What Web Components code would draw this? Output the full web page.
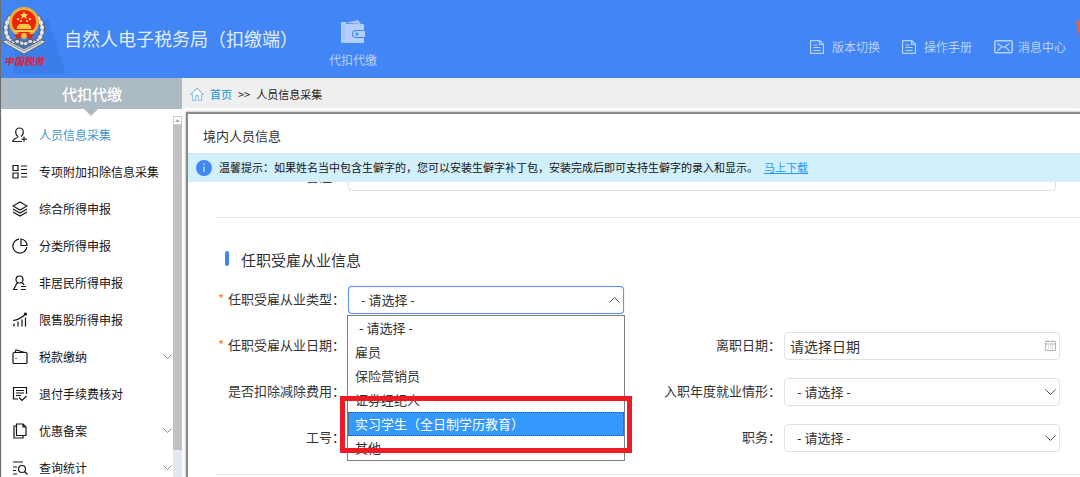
<!DOCTYPE html>
<html lang="zh-CN">
<head>
<meta charset="utf-8">
<title>自然人电子税务局（扣缴端）</title>
<style>
  html, body { margin: 0; height: 100%; overflow: hidden; }
  body { font-family: "Noto Sans CJK SC", "Noto Sans", sans-serif; color: #333; background: #fff; }
</style>
</head>
<body>
<tax-app></tax-app>
<script>
const BASE = `*{box-sizing:border-box} svg{display:block;flex:none} a{color:inherit;text-decoration:none} button,input,select{font-family:inherit;color:inherit;margin:0}`;
function define(name, render) {
  customElements.define(name, class extends HTMLElement {
    constructor() {
      super();
      this.attachShadow({ mode: 'open' });
    }
    connectedCallback() {
      const r = render(this);
      this.shadowRoot.innerHTML = `<style>${BASE}${r.css}</style>${r.html}`;
    }
  });
}

define('tax-emblem', () => ({
  css: `:host{display:flex;flex-direction:column;align-items:center;width:44px}
    span{font-size:10px;line-height:12px;font-weight:700;color:#e0222e;font-style:italic;white-space:nowrap}`,
  html: `<svg width="44" height="48" viewBox="0 0 44 48" aria-hidden="true">
    <g fill="none" stroke-linecap="round">
      <path d="M8 11C1 19 3 31 12 37M36 11C43 19 41 31 32 37" stroke="#56677f" stroke-width="6"/>
      <path d="M8 11C1 19 3 31 12 37M36 11C43 19 41 31 32 37" stroke="#dfe4ec" stroke-width="4" stroke-dasharray="1 4"/>
      <path d="M10 36Q16 32 22 38Q28 32 34 36" stroke="#56677f" stroke-width="5"/>
      <path d="M10 36Q16 32 22 38Q28 32 34 36" stroke="#d5dbe4" stroke-width="3" stroke-dasharray="1 4"/>
    </g>
    <path d="M0 34L5 33L22 42L39 33L44 34L40 37L22 47L4 37Z" fill="#dfe2e7" stroke="#5c6470" stroke-width="1"/>
    <path d="M5 35L22 44L39 35" fill="none" stroke="#7c8490" stroke-width="1"/>
    <circle cx="22" cy="15" r="15" fill="#e2b23c"/>
    <circle cx="22" cy="15" r="12" fill="#f0230f"/>
    <path d="M22 4l1 3h3l-2 2 1 3-3-2-3 2 1-3-2-2h3zM15 11h2v2h-2zM27 11h2v2h-2zM18 13h2v2h-2zM24 13h2v2h-2z" fill="#ffe05a"/>
    <path d="M17 17h10l1 2h1v3H15v-3h1zM12 23h20v2H12z" fill="#f7c944"/>
    <path d="M12 28Q22 24 32 28L29 32Q22 29 15 32Z" fill="#d9281c"/>
    <circle cx="22" cy="29" r="3" fill="#e9bb40"/>
  </svg><span>中国税务</span>`
}));

const DOC = `<svg width="14" height="14" viewBox="0 0 14 14" fill="none" stroke="currentColor"><path d="M1.5.5h8l4 4v8q0 1-1 1h-11q-1 0-1-1v-11q0-1 1-1z" stroke-width="1.3"/><path d="M9.500.5v4h4M3.500 5h4M3.500 7.500h7M3.500 10.500h7" stroke-width="1.200"/></svg>`;
const MAIL = `<svg width="19" height="14" viewBox="0 0 19 14" fill="none" stroke="currentColor"><rect x=".8" y=".8" width="17.400" height="12" rx="1.500" stroke-width="1.500"/><path d="M3.500 3.500l6 4 6-4M3.500 11l4-4M15.500 11l-4-4" stroke-width="1.100"/></svg>`;

define('app-header', () => ({
  css: `:host{display:flex;align-items:center;position:relative;height:78px;padding:0 14px 0 1px;background:#4285f5;color:#dbe8fd;overflow:hidden}
    .shade{position:absolute;left:13px;top:18px}
    tax-emblem{position:relative;margin-bottom:4px}
    h1{margin:0 0 2px 18px;font-size:18px;line-height:26px;font-weight:400;white-space:nowrap;color:#e3edfe}
    .module{display:flex;flex-direction:column;align-items:center;gap:7px;margin:10px 0 0 31px;font-size:12px;line-height:18px;color:#b9d3fc}
    nav{display:flex;gap:22px;margin:15px 0 0 auto;font-size:12px;line-height:18px;color:#b9d3fc}
    nav a{display:flex;align-items:center;gap:8px;white-space:nowrap}
    nav a:last-child{gap:5px}
    .ribbon{position:absolute;right:0;top:20px}`,
  html: `<svg class="shade" width="52" height="56"><path d="M0 56V24L34 0L52 56Z" fill="#3b7deb"/></svg>
    <tax-emblem></tax-emblem><h1>自然人电子税务局（扣缴端）</h1>
    <a class="module" href="#withholding"><svg width="26" height="24" viewBox="0 0 26 24"><path d="M5 3L18 0l3 4z" fill="#a9c8f9"/><path d="M2 2h4v2h17q1 0 1 1v5h-8q-4 0-4 4t4 4h8v4q0 1-1 1H2q-1 0-1-1V3q0-1 1-1z" fill="#b4cffa"/><path d="M4 4v19" stroke="#5e97f4" stroke-width="1" stroke-dasharray="1 2"/><path d="M16 11h9v6h-9q-3 0-3-3t3-3z" fill="#b4cffa"/><circle cx="17" cy="14" r="1.500" fill="#4285f5"/></svg>代扣代缴</a>
    <nav><a href="#version">${DOC}版本切换</a><a href="#manual">${DOC}操作手册</a><a href="#messages">${MAIL}消息中心</a></nav>
    <svg class="ribbon" width="4" height="20"><path d="M4 0L0 2L4 18Z" fill="#f1602f"/></svg>`
}));

const ICONS = {
  person: `<path d="M6 9.500C2.500 7 3 1 7.500 1S12.500 7 9 9.500M6 9.500C6.500 11.500.8 11 .8 14.500H10M12 9.500v5.500M9.500 12.200h5.500"/>`,
  list: `<path d="M1 1.500h5v5H1zM1 9h5v5H1zM9 2h6M9 5.500h6M9 9.500h6M9 13h6"/>`,
  layers: `<path d="M8 1l7 4-7 4-7-4zM1 8l7 4 7-4M1 11l7 4 7-4"/>`,
  pie: `<path d="M7 1.200A7 7 0 1 0 14.800 9M9 1v6.500h6A6.500 6.500 0 0 0 9 1z"/>`,
  resident: `<circle cx="7.500" cy="4.500" r="3.500"/><path d="M5.500 7.500C4 9 3.500 12 1.500 14.500h4M9.500 8q2 0 2.500 2M9 11.500h5M9 14.500h5"/>`,
  chart: `<path d="M2 14.500v-3M6 14.500v-5M10 14.500v-7M13.500 14.500v-9M1 8.500C6 8 10 5.500 13 2.500"/><circle cx="13.500" cy="2" r="1" fill="currentColor"/>`,
  wallet: `<path d="M1 4.500q0-1 1-1h12q1 0 1 1v9q0 1-1 1H2q-1 0-1-1zM3 3.500l1-2.500 9 2.500M4 9v1"/>`,
  check: `<path d="M14.500 8V1.500H1.500v11.500H6M4 4.500h8M4 7h8M4 9.500h5M7 11.500l3 3 4.500-4.500"/>`,
  copy: `<path d="M4.500 1H11l3 3v8.500H4.500zM4.500 3H2v12h9v-2M11 1v3h3"/>`,
  query: `<path d="M1 2h10M1 7h4M1 10.500h3M1 14h4"/><circle cx="10" cy="9" r="3.500"/><path d="M12.500 11.500l3 3"/>`
};

define('side-item', el => ({
  css: `:host{display:block}
    a{display:flex;align-items:center;gap:11px;height:37px;padding:0 1px 0 10px;font-size:12px;color:#151515;white-space:nowrap}
    a.on{color:#4596cd} a.on svg{color:#222}
    .chev{margin-left:auto;color:#8a8a8a}`,
  html: `<a href="#menu" class="${el.hasAttribute('active') ? 'on' : ''}"><svg width="16" height="16" viewBox="0 0 16 16" fill="none" stroke="currentColor" stroke-width="1.200">${ICONS[el.getAttribute('icon')]}</svg><slot></slot>${el.hasAttribute('expandable') ? '<svg class="chev" width="9" height="6" viewBox="0 0 9 6" fill="none" stroke="currentColor"><path d="M.5.500l4 4 4-4"/></svg>' : ''}</a>`
}));

define('side-bar', () => ({
  css: `:host{display:flex;flex-direction:column;width:181px;flex:none;min-height:0}
    h2{position:relative;z-index:1;margin:0;flex:none;height:31px;font-size:15px;line-height:31px;font-weight:500;text-align:center;color:#fff;background:#acbac3;padding-left:1px}
    h2 svg{position:absolute;left:83px;top:31px}
    .body{display:flex;flex:1;min-height:0;padding-top:7px}
    nav{flex:1;min-width:0;overflow:hidden;border-left:1px solid #e8e8e8}
    .bar{display:flex;flex-direction:column;width:9px;background:#e3e8f0}
    .up{display:flex;align-items:center;justify-content:center;height:9px;background:#fff;border:1px solid #ccc}
    .thumb{background:#c1c1c1;height:90%}`,
  html: `<h2>代扣代缴<svg width="14" height="7"><path d="M0 0h14L7 7z" fill="#acbac3"/></svg></h2>
    <div class="body"><nav>
      <side-item icon="person" active>人员信息采集</side-item>
      <side-item icon="list">专项附加扣除信息采集</side-item>
      <side-item icon="layers">综合所得申报</side-item>
      <side-item icon="pie">分类所得申报</side-item>
      <side-item icon="resident">非居民所得申报</side-item>
      <side-item icon="chart">限售股所得申报</side-item>
      <side-item icon="wallet" expandable>税款缴纳</side-item>
      <side-item icon="check">退付手续费核对</side-item>
      <side-item icon="copy" expandable>优惠备案</side-item>
      <side-item icon="query" expandable>查询统计</side-item>
    </nav><div class="bar"><div class="up"><svg width="5" height="3"><path d="M0 3h5L2.500 0z" fill="#aaa"/></svg></div><div class="thumb"></div></div></div>`
}));

define('bread-crumb', () => ({
  css: `:host{display:flex;align-items:center;flex:none;height:30px;padding-left:8px;background:#efefef;font-size:11px;line-height:30px;color:#1c1c1c;padding-top:2px}
    svg{margin-right:6px} a{color:#1493d6} i{font-style:normal;margin:0 6px}`,
  html: `<svg width="14" height="14" viewBox="0 0 14 14" fill="#fff" stroke="#8fc4e6" stroke-width="1.200"><path d="M.8 7.500L7 1l6.200 6.500H11.500v5.800H8.500V9q-1.500-1.500-3 0v4.300H2.500V7.500z"/></svg><a href="#home">首页</a><i>&gt;&gt;</i><span>人员信息采集</span>`
}));

define('tip-bar', () => ({
  css: `:host{display:flex;align-items:center;flex:none;height:29px;padding-left:8px;gap:7px;background:#d2effc;border-top:1px solid #dde3e8;font-size:11px;line-height:16px;color:#111;white-space:nowrap}
    span{margin-bottom:2px}
    a{color:#1e9bff;text-decoration:underline;margin-left:6px}`,
  html: `<svg width="16" height="16" viewBox="0 0 16 16"><circle cx="8" cy="8" r="8" fill="#4285f5"/><path d="M8 6.500V12M8 3.500v1.500" stroke="#dcecff" stroke-width="1.200"/></svg><span>温馨提示：如果姓名当中包含生僻字的，您可以安装生僻字补丁包，安装完成后即可支持生僻字的录入和显示。<a href="#download">马上下载</a></span>`
}));

/* A label cell and a control cell; the host dissolves into the form's grid. */
define('form-field', el => {
  const kind = el.getAttribute('kind'), open = el.hasAttribute('open');
  let control;
  if (kind === 'select') control = `<select id="c"><option>- 请选择 -</option></select><svg class="mark" width="11" height="6" viewBox="0 0 11 6" fill="none" stroke="#555"><path d="${open ? 'M.5 5.500l5-5 5 5' : 'M.5.500l5 5 5-5'}"/></svg>`;
  else if (kind === 'date') control = `<input id="c" type="text" placeholder="请选择日期"><svg class="mark cal" width="11" height="11" viewBox="0 0 11 11" fill="none" stroke="#b5b5b5"><path d="M.5 1.500h10v9H.5zM.5 4h10M3 0v2M8 0v2M3 6h1M5 6h1M7 6h1M3 8h1M5 8h1M7 8h1"/></svg>`;
  else control = `<input id="c" type="text">`;
  return {
    css: `:host{display:contents}
      label{align-self:center;padding-bottom:2px;text-align:right;font-size:13px;line-height:20px;white-space:nowrap;color:#333}
      b{font-weight:400;color:#ff7f27;margin-right:4px}
      .box{position:relative;min-width:0}
      input,select{display:block;width:100%;height:28px;border:1px solid #e2e2e2;border-radius:4px;background:#fff;outline:0;appearance:none;line-height:20px}
      select{font-size:13px;padding:0 24px 0 12px}
      input{font-size:14px;padding:0 24px 0 5px}
      input::placeholder{color:#333;opacity:1}
      .open select{border-color:#5b96f7;box-shadow:0 0 1px #5b96f7}
      .mark{position:absolute;right:4px;top:11px;pointer-events:none}
      .cal{top:8px}`,
    html: `<label for="c">${el.hasAttribute('required') ? '<b>*</b>' : ''}${el.getAttribute('label')}：</label><div class="box ${open ? 'open' : ''}">${control}<slot></slot></div>`
  };
});

define('option-list', () => ({
  css: `:host{position:absolute;z-index:2;left:-1px;right:-1px;top:29px}
    ul{margin:0;padding:0;list-style:none;background:#fff;border:1px solid #808080}
    li{height:24px;line-height:24px;padding-left:7px;font-size:13px;color:#333;white-space:nowrap}
    li:first-child{padding-left:11px}
    li[aria-selected=true]{background:#3399ff;color:#fff;outline:1px dotted #6b4a1c;outline-offset:-1px}
    .frame{position:absolute;left:-7px;right:-7px;top:81px;height:57px;border:5px solid #ed1c24}`,
  html: `<ul role="listbox" aria-label="任职受雇从业类型"><li role="option">- 请选择 -</li><li role="option">雇员</li><li role="option">保险营销员</li><li role="option">证券经纪人</li><li role="option" aria-selected="true">实习学生（全日制学历教育）</li><li role="option">其他</li></ul><div class="frame"></div>`
}));

define('person-form', () => ({
  css: `:host{display:block;flex:1;min-height:0;overflow:hidden;padding-left:27px}
    .grid{display:grid;grid-template-columns:130px 1fr 154px 1fr;column-gap:3px;row-gap:18px;padding-right:20px}
    .remark{grid-template-columns:130px 1fr;margin-top:-19px;padding-right:24px}
    hr{margin:26px 0 0;border:0;border-top:1px solid #e6e6e6}
    h3{display:flex;align-items:center;gap:12px;margin:30px 0 14px;padding-left:10px;font-size:15px;line-height:24px;font-weight:400;color:#333}
    h3::before{content:"";width:4px;height:15px;border-radius:2px;background:#4285f5;margin-top:-4px}
    hr.end{margin-top:22px}`,
  html: `<div class="grid remark"><form-field kind="text" label="备注"></form-field></div>
    <hr><h3>任职受雇从业信息</h3>
    <div class="grid">
      <form-field kind="select" label="任职受雇从业类型" required open><option-list></option-list></form-field><span></span><span></span>
      <form-field kind="text" label="任职受雇从业日期" required></form-field>
      <form-field kind="date" label="离职日期"></form-field>
      <form-field kind="select" label="是否扣除减除费用"></form-field>
      <form-field kind="select" label="入职年度就业情形"></form-field>
      <form-field kind="text" label="工号"></form-field>
      <form-field kind="select" label="职务"></form-field>
    </div><hr class="end">`
}));

define('person-panel', () => ({
  css: `:host{display:flex;flex-direction:column;flex:1;min-height:0;margin:4px 0 0 4px;border:solid #8a8a8a;border-width:2px 0 0 2px;box-shadow:0 0 2px #888;background:#fff}
    h2{flex:none;margin:0;padding:4px 0 0 15px;height:39px;font-size:13px;line-height:36px;font-weight:400;color:#333}`,
  html: `<h2>境内人员信息</h2><tip-bar></tip-bar><person-form></person-form>`
}));

define('tax-app', () => ({
  css: `:host{display:flex;flex-direction:column;height:100vh;border-left:1px solid #6d6d6d;overflow:hidden}
    app-header{flex:none}
    .main{display:flex;flex:1;min-height:0}
    main{display:flex;flex-direction:column;flex:1;min-width:0}`,
  html: `<app-header></app-header><div class="main"><side-bar></side-bar><main><bread-crumb></bread-crumb><person-panel></person-panel></main></div>`
}));
</script>
</body>
</html>
